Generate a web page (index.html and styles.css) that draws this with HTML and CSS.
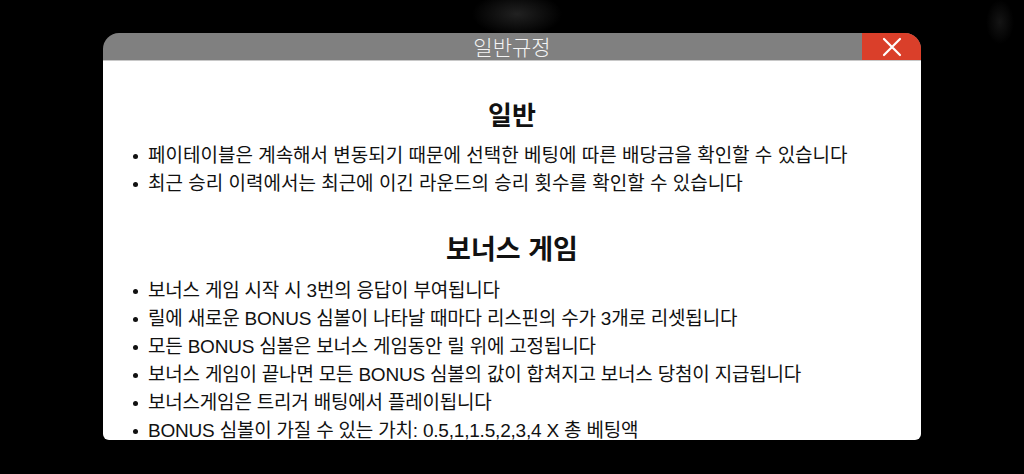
FILE: index.html
```html
<!DOCTYPE html>
<html lang="ko">
<head>
<meta charset="utf-8">
<title>일반규정</title>
<link rel="stylesheet" href="styles.css">
</head>
<body>
<div class="modal">
  <div class="modal-header">
    <div class="modal-title">일반규정</div>
    <button class="close-btn" aria-label="close">
      <svg width="20" height="20" viewBox="0 0 20 20"><path d="M2 2 L18 18 M18 2 L2 18" stroke="#fff" stroke-width="2.2" fill="none" stroke-linecap="round"/></svg>
    </button>
  </div>
  <div class="modal-body">
    <h2 class="section-title">일반</h2>
    <ul class="rules">
      <li>페이테이블은 계속해서 변동되기 때문에 선택한 베팅에 따른 배당금을 확인할 수 있습니다</li>
      <li>최근 승리 이력에서는 최근에 이긴 라운드의 승리 횟수를 확인할 수 있습니다</li>
    </ul>
    <h2 class="section-title second">보너스 게임</h2>
    <ul class="rules narrow">
      <li>보너스 게임 시작 시 3번의 응답이 부여됩니다</li>
      <li>릴에 새로운 BONUS 심볼이 나타날 때마다 리스핀의 수가 3개로 리셋됩니다</li>
      <li>모든 BONUS 심볼은 보너스 게임동안 릴 위에 고정됩니다</li>
      <li>보너스 게임이 끝나면 모든 BONUS 심볼의 값이 합쳐지고 보너스 당첨이 지급됩니다</li>
      <li>보너스게임은 트리거 배팅에서 플레이됩니다</li>
      <li>BONUS 심볼이 가질 수 있는 가치: 0.5,1,1.5,2,3,4 X 총 베팅액</li>
    </ul>
  </div>
</div>
</body>
</html>
```
FILE: styles.css
```css
html, body {
  margin: 0;
  padding: 0;
}
body {
  width: 1024px;
  height: 474px;
  overflow: hidden;
  background:
    radial-gradient(ellipse 45px 22px at 517px 14px, rgba(60,60,60,0.55), rgba(0,0,0,0) 100%),
    radial-gradient(ellipse 14px 22px at 1000px 22px, rgba(40,40,40,0.5), rgba(0,0,0,0) 100%),
    #000;
  font-family: "Liberation Sans", "Noto Sans CJK KR", sans-serif;
  padding-top: 33px;
  box-sizing: border-box;
}
.modal {
  margin-left: 103px;
  width: 818px;
  display: flex;
  flex-direction: column;
}
.modal-header {
  height: 28px;
  background: #808080;
  border-radius: 16px 16px 0 0;
  display: flex;
  align-items: stretch;
  border-bottom: 1px solid #c8c8c8;
  box-sizing: border-box;
}
.modal-title {
  flex: 1;
  display: flex;
  align-items: center;
  justify-content: center;
  color: #f4f4f4;
  font-family: "Noto Sans CJK KR", sans-serif;
  font-size: 21px;
  font-weight: 300;
  line-height: 1;
  padding-left: 59px;
}
.close-btn {
  width: 59px;
  border: 0;
  padding: 0;
  margin: 0;
  background: #da3f2a;
  border-radius: 0 16px 0 0;
  display: flex;
  align-items: center;
  justify-content: center;
  cursor: pointer;
}
.modal-body {
  height: 379px;
  background: #fff;
  border-radius: 0 0 6px 6px;
  overflow: hidden;
  padding-top: 38px;
  box-sizing: border-box;
  color: #111;
}
.section-title {
  margin: 0;
  text-align: center;
  font-family: "Noto Sans CJK KR", sans-serif;
  font-size: 26px;
  font-weight: 700;
  line-height: 30px;
}
.section-title.second {
  margin-top: 35px;
  font-size: 27px;
}
.rules {
  list-style: none;
  margin: 13px 0 0 0;
  padding: 0 0 0 30px;
}
.section-title.second + .rules {
  margin-top: 14px;
}
.rules li {
  display: flex;
  align-items: center;
  height: 28px;
  font-size: 19px;
  line-height: 28px;
  white-space: nowrap;
}
.rules li::before {
  content: "";
  width: 5px;
  height: 5px;
  border-radius: 50%;
  background: #111;
  margin-right: 10px;
  flex: none;
}
.rules.narrow li {
  letter-spacing: -0.2px;
}
```
